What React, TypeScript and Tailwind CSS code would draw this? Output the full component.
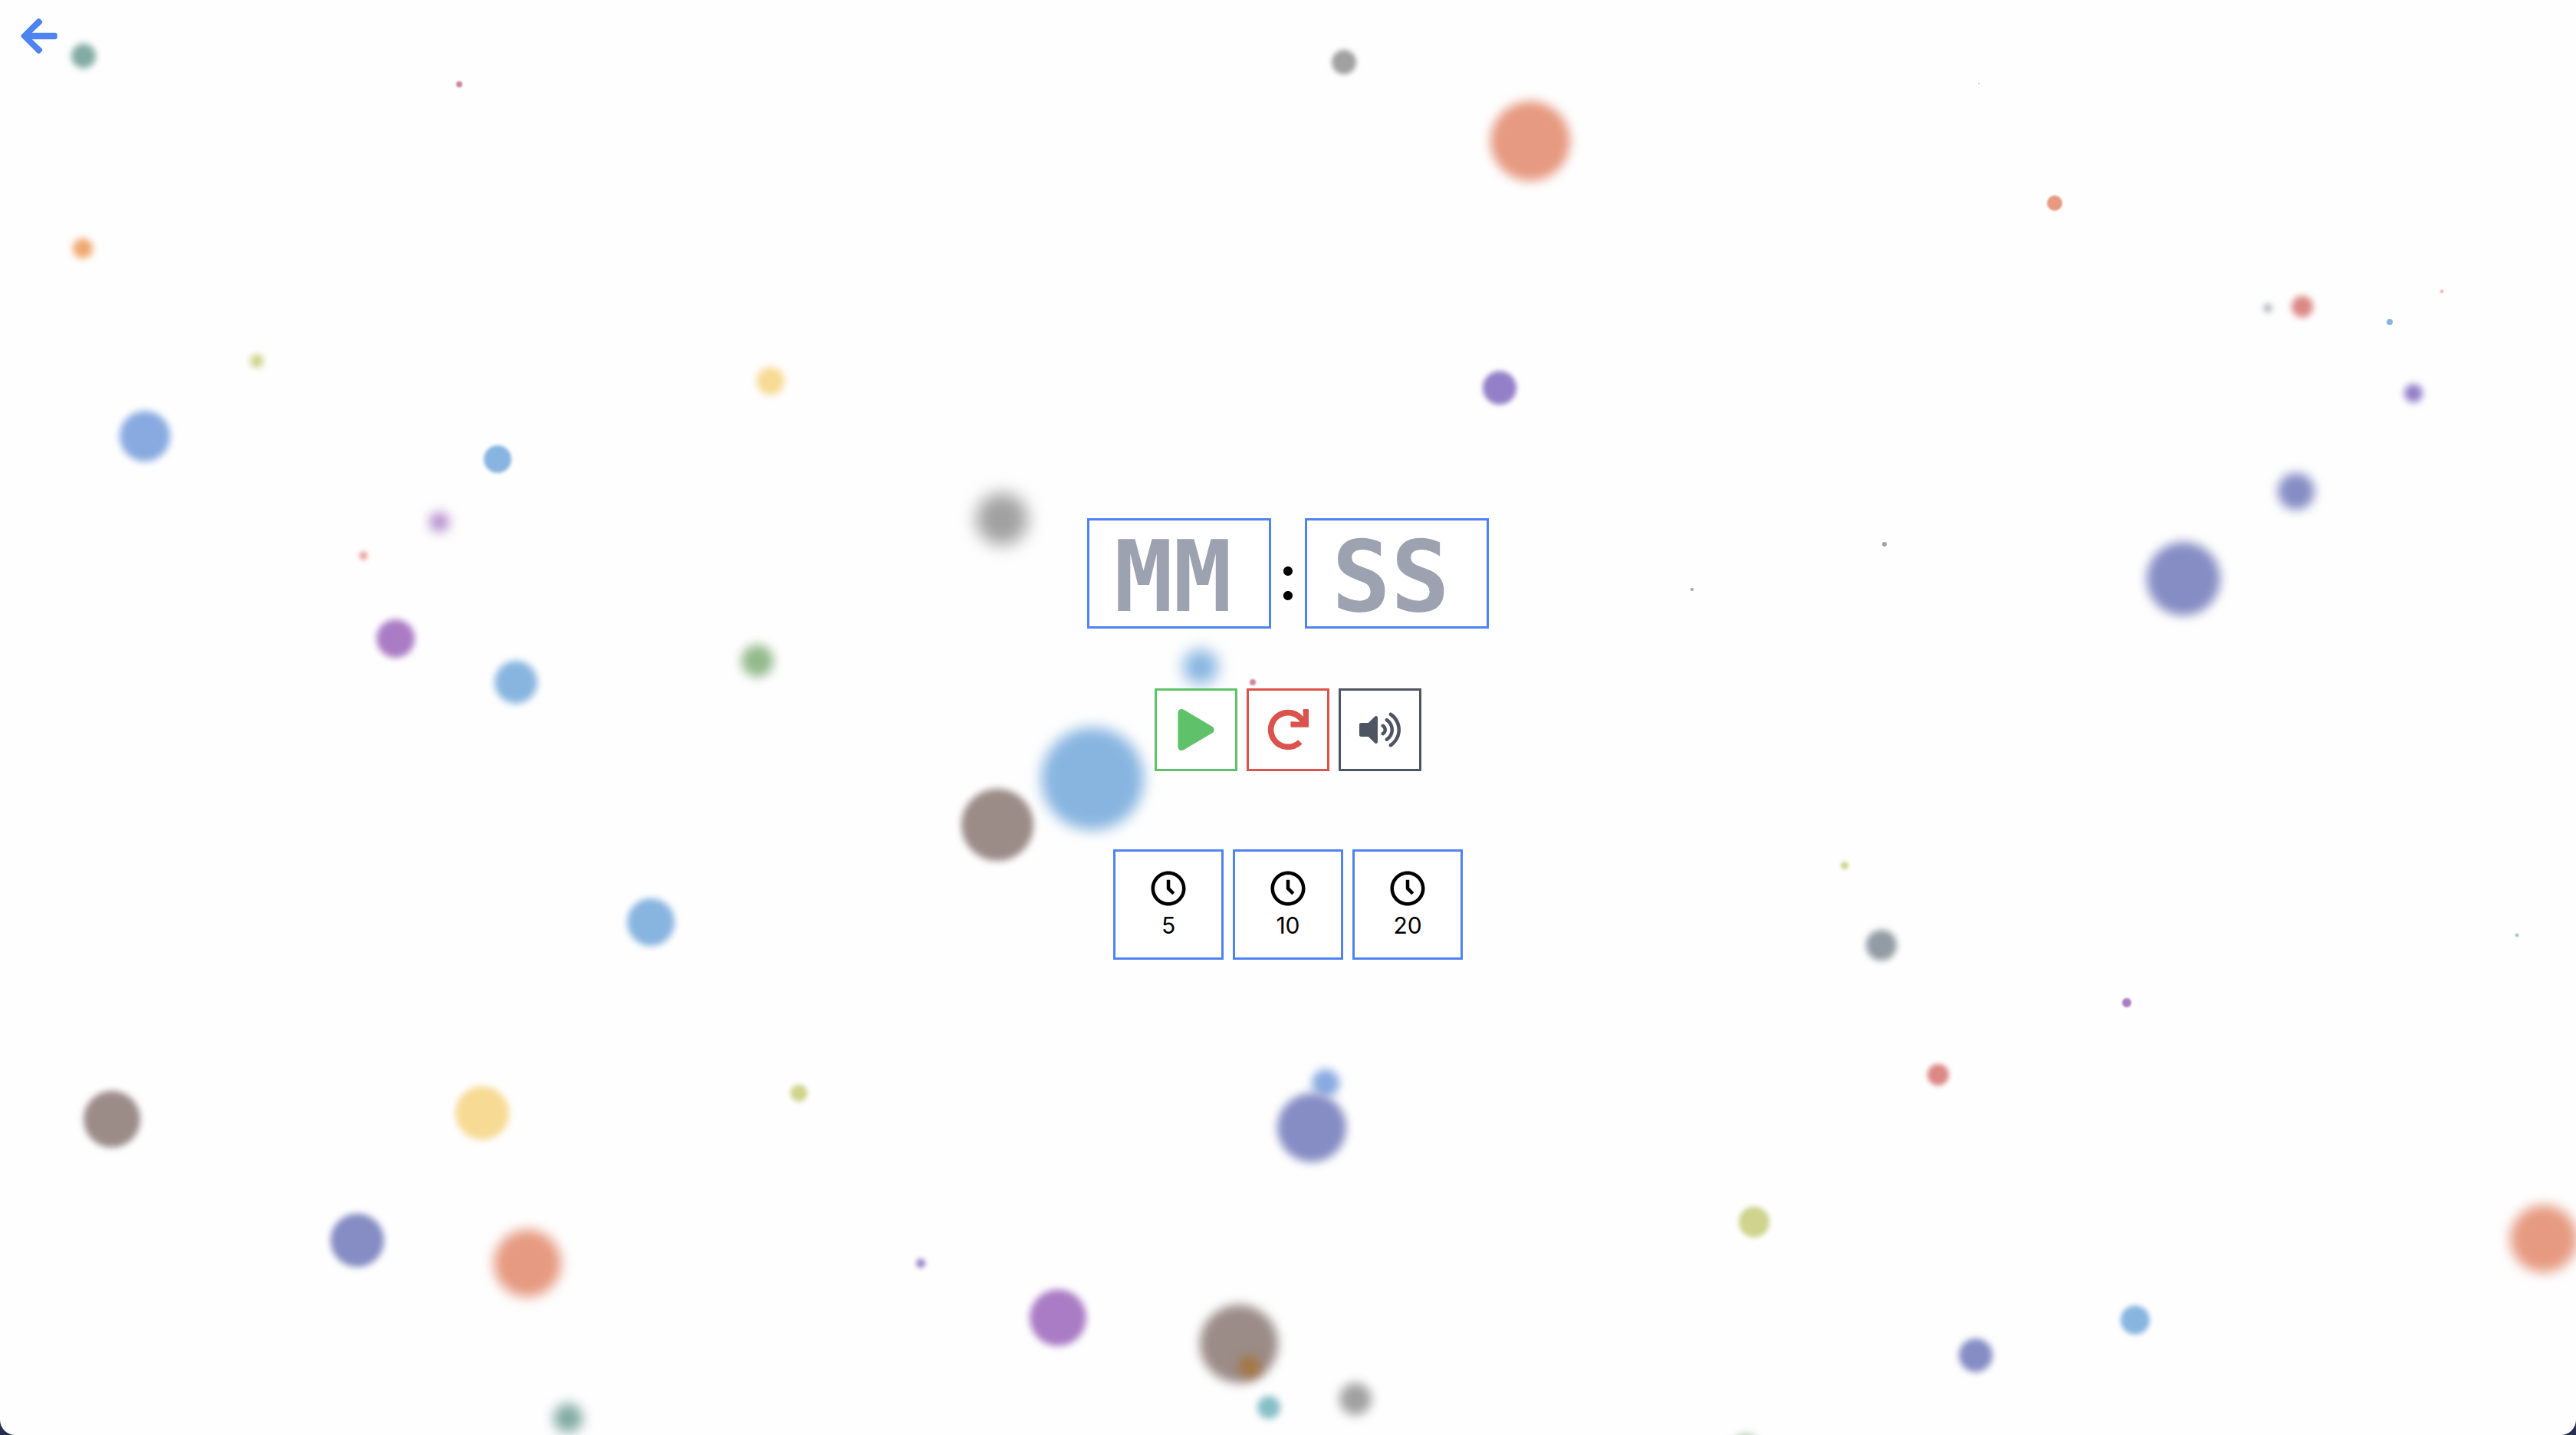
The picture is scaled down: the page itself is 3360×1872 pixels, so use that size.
import { BiTimeFive } from "react-icons/bi";
import { FaArrowLeft, FaPlay, FaRedo, FaVolumeUp } from "react-icons/fa";

const TEAL = "#82aba3";
const PINK = "#cf849e";
const LIME = "#cfd38c";
const BLUE = "#88aae0";
const SKY = "#88b5e0";
const YELLOW = "#f7da94";
const PURPLE = "#aa7cc5";
const VIOLET = "#9480c8";
const GREEN = "#94ba8c";
const GRAY = "#a1a1a1";
const CORAL = "#e69a81";
const BROWN = "#9b8c88";
const RED = "#dc8885";
const INDIGO = "#868dc4";

// Each bubble: centre x, centre y, radius, blur, colour
const bubbles: [number, number, number, number, string][] = [
  [109, 73, 16, 4, TEAL],
  [599, 110, 4, 1, PINK],
  [108, 324, 13, 5, "#f0a870"],
  [335, 471, 9, 4, LIME],
  [189, 569, 33, 5, BLUE],
  [1005, 497, 18, 5, YELLOW],
  [649, 599, 18, 2, SKY],
  [573, 681, 12, 8, PURPLE],
  [474, 725, 5, 3, "#e88d8a"],
  [516, 833, 25, 4, PURPLE],
  [673, 890, 28, 5, SKY],
  [988, 862, 21, 7, GREEN],
  [1753, 81, 16, 3, GRAY],
  [1996, 184, 52, 7, CORAL],
  [1956, 506, 22, 3, VIOLET],
  [1307, 677, 34, 11, GRAY],
  [1566, 870, 23, 10, SKY],
  [1634, 890, 4, 1, PINK],
  [1425, 1016, 67, 9, SKY],
  [1301, 1076, 47, 5, BROWN],
  [2581, 109, 1, 0, "#b5c0a5"],
  [2680, 265, 10, 1, CORAL],
  [2958, 402, 5, 4, "#929ba3"],
  [3003, 400, 14, 4, RED],
  [3117, 420, 4, 0, SKY],
  [3185, 380, 2, 1, CORAL],
  [3148, 513, 12, 5, VIOLET],
  [2995, 641, 24, 7, INDIGO],
  [2848, 755, 48, 7, INDIGO],
  [2458, 710, 3, 0, GRAY],
  [2207, 769, 2, 0, GRAY],
  [849, 1203, 31, 4, SKY],
  [146, 1460, 37, 4, BROWN],
  [629, 1452, 35, 4, YELLOW],
  [1042, 1426, 11, 3, LIME],
  [466, 1618, 35, 4, INDIGO],
  [688, 1648, 44, 8, CORAL],
  [741, 1850, 19, 8, TEAL],
  [1729, 1413, 18, 6, BLUE],
  [1711, 1471, 45, 6, INDIGO],
  [1201, 1648, 6, 3, VIOLET],
  [1380, 1719, 37, 5, PURPLE],
  [1616, 1753, 51, 7, BROWN],
  [1630, 1783, 14, 7, "#a5753f"],
  [1655, 1836, 15, 5, "#86bfc6"],
  [1768, 1825, 21, 7, GRAY],
  [2406, 1129, 5, 2, LIME],
  [2454, 1233, 20, 4, "#929ba3"],
  [3283, 1220, 2, 1, "#6fa5c0"],
  [2774, 1308, 6, 1, PURPLE],
  [2528, 1402, 14, 3, RED],
  [2288, 1594, 20, 3, LIME],
  [3318, 1616, 44, 8, CORAL],
  [2785, 1722, 19, 3, SKY],
  [2577, 1768, 22, 4, INDIGO],
  [2277, 1888, 16, 6, GREEN],
];

function Bubbles() {
  return (
    <svg
      aria-hidden="true"
      className="pointer-events-none absolute inset-0 h-full w-full"
      viewBox="0 0 3360 1872"
      preserveAspectRatio="xMidYMid slice"
    >
      {bubbles.map(([x, y, r, blur, fill]) => (
        <circle key={`${x}-${y}`} cx={x} cy={y} r={r} fill={fill} style={blur ? { filter: `blur(${blur}px)` } : undefined} />
      ))}
    </svg>
  );
}

function TimeInput({ label, placeholder }: { label: string; placeholder: string }) {
  return (
    <input
      type="text"
      aria-label={label}
      placeholder={placeholder}
      maxLength={2}
      className="h-36 w-60 border-3 border-[#4f83f1] bg-white px-8 pt-2 font-['DejaVu_Sans_Mono',monospace] text-[128px] leading-none font-bold text-black outline-none placeholder:text-[#9ca2af]"
    />
  );
}

export default function App() {
  return (
    <div className="min-h-screen bg-[#26304e]">
      <div className="relative flex min-h-screen flex-col overflow-hidden rounded-b-[20px] bg-[#fefefe] font-['Inter',sans-serif] text-black">
        <Bubbles />
        <header className="relative flex p-5 pl-6">
          <a href="#" aria-label="Back" className="text-[#4f83f1]">
            <FaArrowLeft size={54} />
          </a>
        </header>

        <main className="relative flex flex-1 flex-col items-center justify-center pb-[38px]">
          <div className="flex items-center">
            <TimeInput label="Minutes" placeholder="MM" />
            <span className="w-11 pt-2 text-center text-[84px] leading-none font-medium">:</span>
            <TimeInput label="Seconds" placeholder="SS" />
          </div>

          <div className="mt-[78px] flex gap-3">
            <button type="button" aria-label="Start" className="flex size-27 items-center justify-center border-3 border-[#5fc26a] bg-white text-[#5fc26a]">
              <FaPlay size={54} />
            </button>
            <button type="button" aria-label="Reset" className="flex size-27 items-center justify-center border-3 border-[#dc524c] bg-white text-[#dc524c]">
              <FaRedo size={54} />
            </button>
            <button type="button" aria-label="Sound" className="flex size-27 items-center justify-center border-3 border-[#4d5462] bg-white text-[#4d5462]">
              <FaVolumeUp size={54} />
            </button>
          </div>

          <div className="mt-[102px] flex gap-3">
            {[5, 10, 20].map((minutes) => (
              <button
                key={minutes}
                type="button"
                className="flex size-36 flex-col items-center justify-center border-3 border-[#4f83f1] bg-white text-[30px] leading-[42px]"
              >
                <BiTimeFive size={54} aria-hidden="true" />
                {minutes}
              </button>
            ))}
          </div>
        </main>
      </div>
    </div>
  );
}
